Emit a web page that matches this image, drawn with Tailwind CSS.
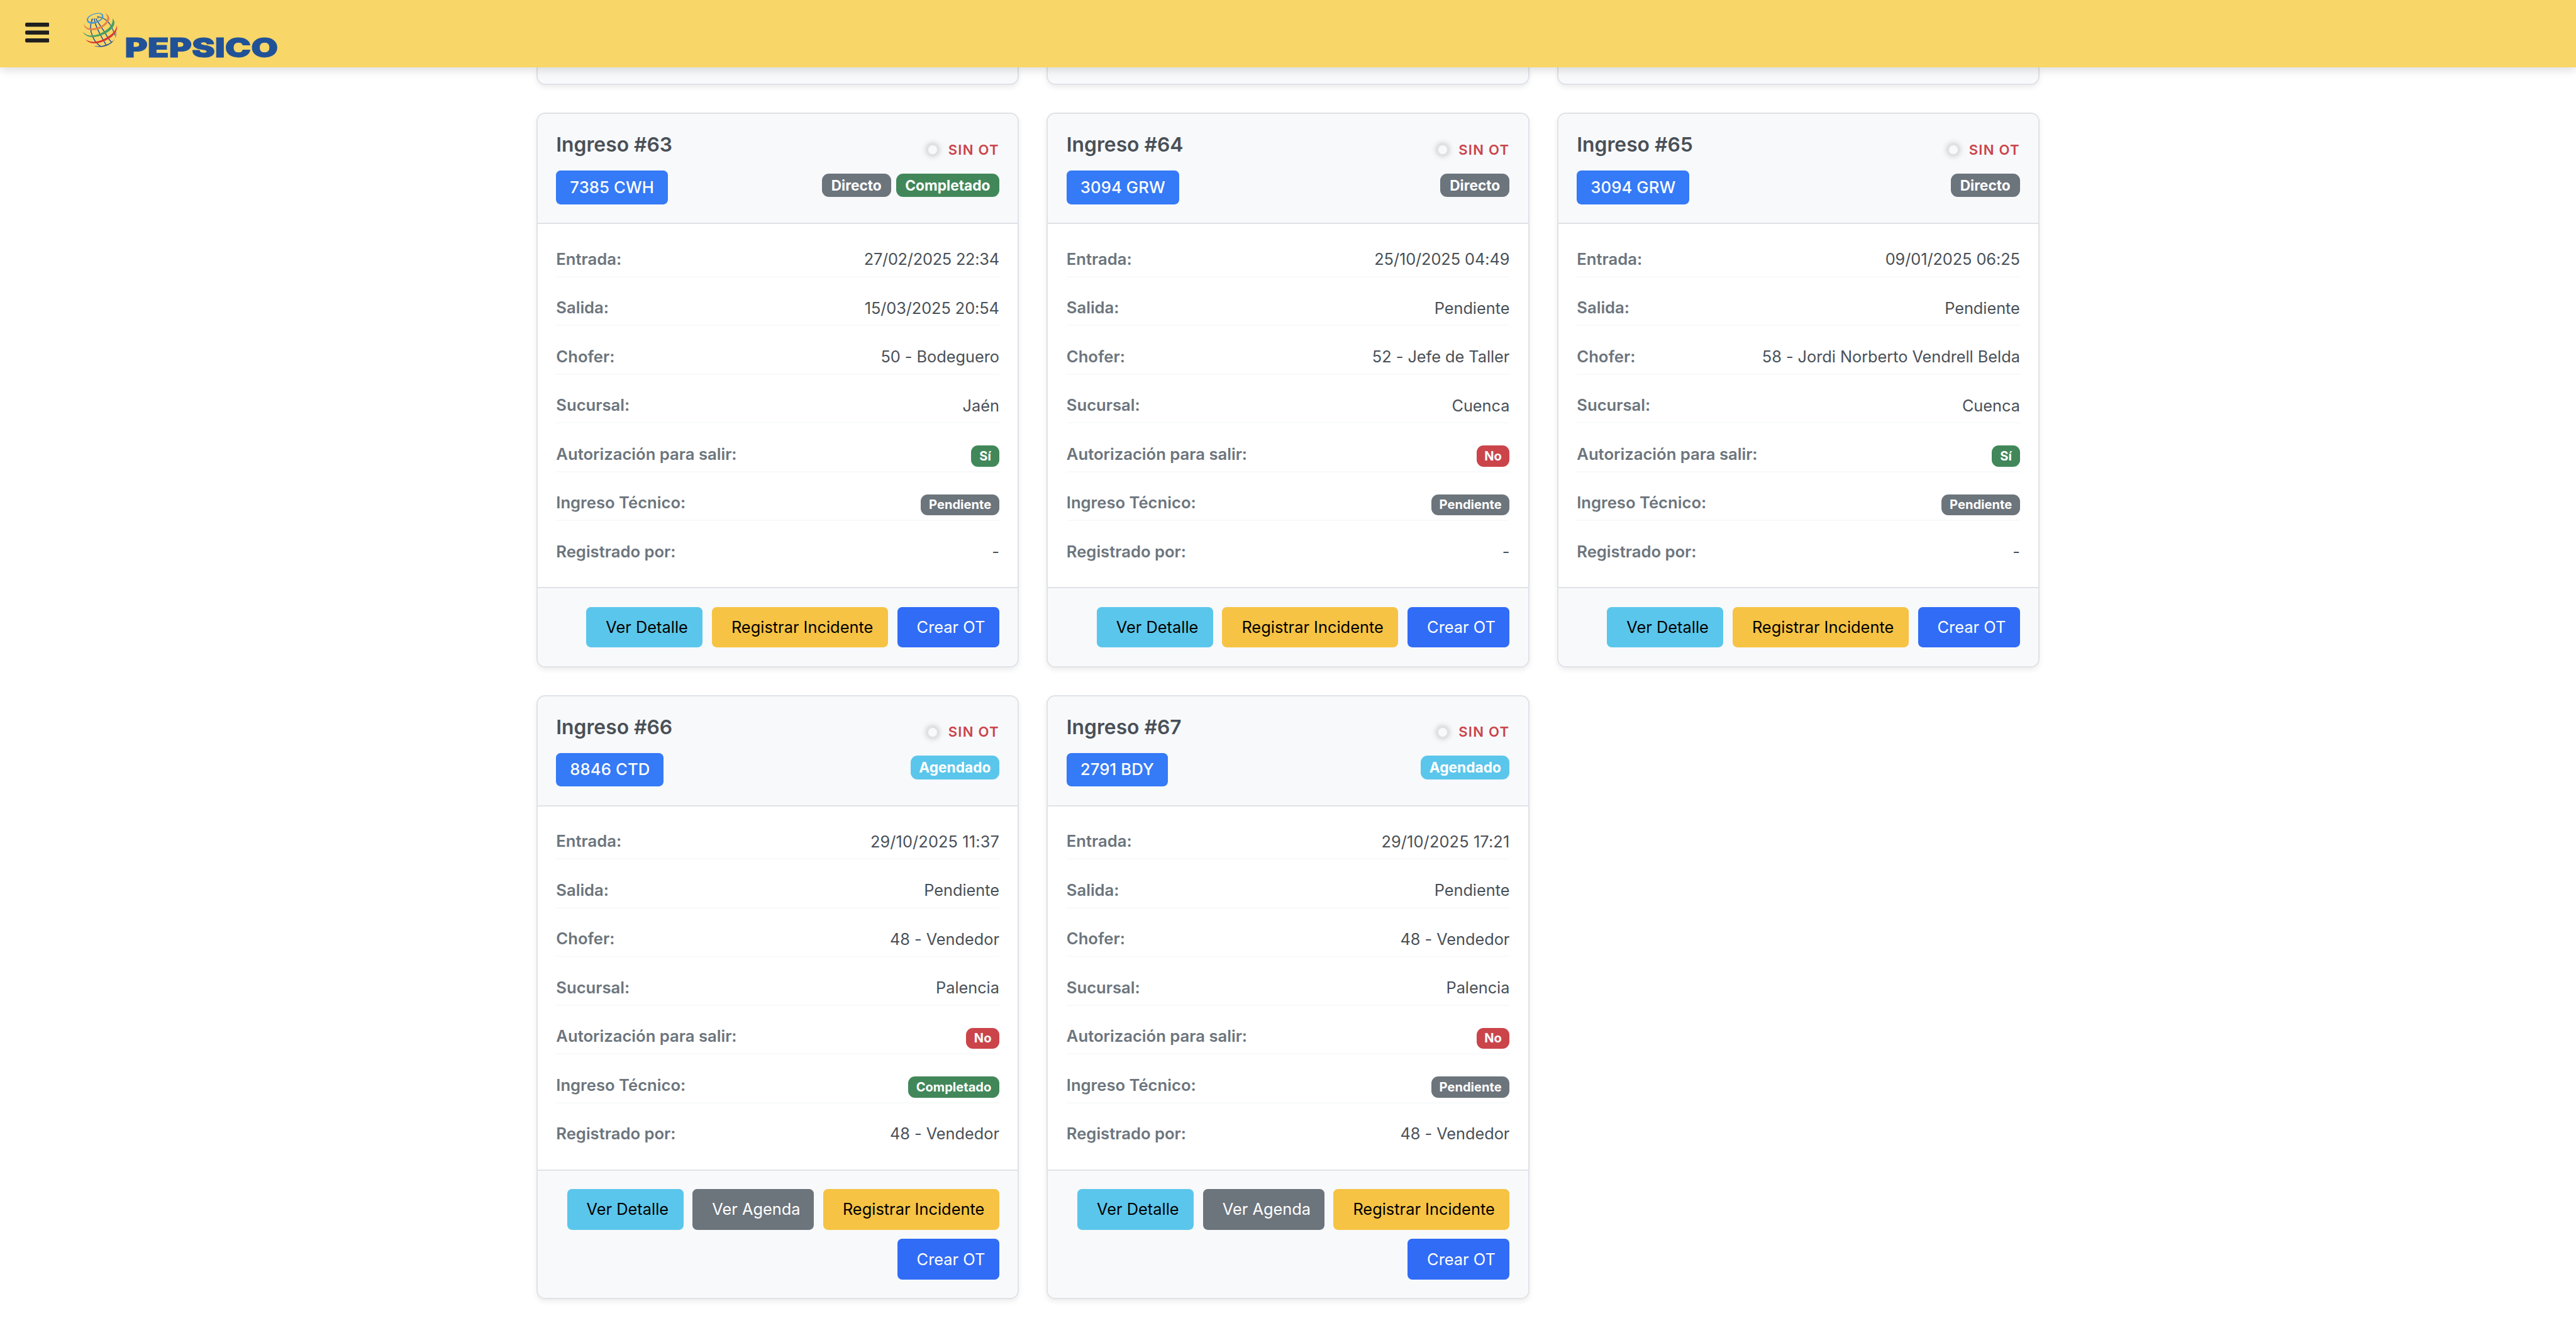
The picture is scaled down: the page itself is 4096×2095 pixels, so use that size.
<!DOCTYPE html>
<html lang="es">
<head>
<meta charset="utf-8">
<title>Ingresos</title>
<script src="https://cdn.jsdelivr.net/npm/@tailwindcss/browser@4"></script>
</head>
<body class="bg-white font-['Inter',sans-serif] text-[#495057] h-[2095px] overflow-hidden">
<header class="relative z-10 h-[107px] flex bg-[#f8d668] shadow-[0_4px_14px_rgba(0,0,0,0.14)]">
  <svg class="ml-[39.7px] mt-[36px] w-[38.8px] h-[31.6px] shrink-0" viewBox="0 0 42 34.3" fill="#1f1f1f">
    <rect x="0" y="0" width="42" height="7" rx="2.4"/><rect x="0" y="13.5" width="42" height="7.2" rx="2.4"/><rect x="0" y="27.2" width="42" height="7" rx="2.4"/>
  </svg>
  <svg class="ml-[50.6px] mt-[18.4px] w-[61.5px] h-[58.4px] shrink-0" viewBox="420 60 200 190" fill="none">
    <g stroke="#215298" stroke-width="4.8">
      <path d="M479 98C464 128 466 160 480 192C490 215 504 231 524 243"/>
      <path d="M488 97C490 125 503 150 516 174C530 204 543 220 551 238"/>
      <path d="M496 98C510 120 528 148 543 170C557 194 566 208 577 220"/>
      <path d="M503 87C535 90 560 110 574 134C586 156 592 176 595 184" stroke-width="4"/>
      <path d="M600 166C600 178 599 188 597 194" stroke-width="2.6"/>
      <path d="M502 96L514 92" stroke-width="2.4"/><path d="M474 108L477 98" stroke-width="2.4"/>
    </g>
    <path fill="#215298" d="M486 239C518 250 568 246 594 203C574 228 530 246 486 239Z"/>
    <path fill="#4497d8" fill-rule="evenodd" d="M450 108C445 88 478 70 508 68C528 68 537 76 535 88C531 106 507 121 482 124C463 125 452 119 450 108ZM456 103C457 113 468 117 485 115C508 112 527 100 528 86C529 76 519 71 505 72C482 74 455 88 456 103Z"/>
    <path fill="#e5834a" d="M436 120C429 148 458 162 495 156C538 148 570 116 565 91C562 80 555 74 545 71C554 79 558 90 555 100C547 124 520 142 493 146C462 152 435 145 436 120Z"/>
    <path fill="#459f61" d="M428 163C440 196 482 198 517 187C567 171 599 138 591 110L583 96C588 126 564 156 515 177C480 189 446 190 428 163Z"/>
    <path fill="#d9362f" d="M442 205C460 228 492 229 522 220C572 205 612 170 605 132C602 160 573 189 525 209C490 222 465 220 442 205Z"/>
  </svg>
  <svg class="ml-[1px] mt-[46px] w-[262px] h-[60px] shrink-0" viewBox="-6 -8 262 60">
    <text x="0.5" y="37" font-family="Inter" font-weight="900" font-size="42" textLength="243.5" lengthAdjust="spacingAndGlyphs" fill="#215298" stroke="#215298" stroke-width="0.9">PEPSICO</text>
  </svg>
</header>

<main id="grid" class="mx-auto w-[2390px] grid grid-cols-[repeat(3,767.2px)] gap-x-[44.3px] gap-y-[44px] items-start">
  <div class="h-[28px] rounded-b-[14px] border-2 border-t-0 border-[#dfe2e7] bg-[#f8f9fb] shadow-[0_4px_8px_rgba(0,0,0,0.075)]"></div>
  <div class="h-[28px] rounded-b-[14px] border-2 border-t-0 border-[#dfe2e7] bg-[#f8f9fb] shadow-[0_4px_8px_rgba(0,0,0,0.075)]"></div>
  <div class="h-[28px] rounded-b-[14px] border-2 border-t-0 border-[#dfe2e7] bg-[#f8f9fb] shadow-[0_4px_8px_rgba(0,0,0,0.075)]"></div>
</main>

<script>
const COLORS = { gray: "bg-[#6c747c]", green: "bg-[#41875a]", red: "bg-[#cb444a]", cyan: "bg-[#5bc6eb]" };
const BUTTONS = {
  detalle: ["Ver Detalle", "w-[185px] bg-[#5bc6eb] text-black"],
  agenda: ["Ver Agenda", "w-[193px] bg-[#6c747c] text-white"],
  incidente: ["Registrar Incidente", "w-[280px] bg-[#f6c344] text-black"],
  ot: ["Crear OT", "w-[162.3px] bg-[#316cf6] text-white"]
};
const BASIC = ["detalle", "incidente", "ot"];
const WITH_AGENDA = ["detalle", "agenda", "incidente", "ot"];
// Badge: text, colour, width
const P = ["Pendiente", "gray", "w-[124.5px]"], SI = ["Sí", "green", "w-[44.5px]"], NO = ["No", "red", "w-[52.5px]"];
const CS = ["Completado", "green", "w-[144.8px]"], C = ["Completado", "green", "w-[164px]"];
const D = ["Directo", "gray", "w-[110.3px]"], A = ["Agendado", "cyan", "w-[141px]"];
const ingresos = [
  { id: 63, plate: "7385 CWH", tags: [D, C], v: ["27/02/2025 22:34", "15/03/2025 20:54", "50 - Bodeguero", "Jaén", SI, P, "-"], b: BASIC },
  { id: 64, plate: "3094 GRW", tags: [D], v: ["25/10/2025 04:49", "Pendiente", "52 - Jefe de Taller", "Cuenca", NO, P, "-"], b: BASIC },
  { id: 65, plate: "3094 GRW", tags: [D], v: ["09/01/2025 06:25", "Pendiente", "58 - Jordi Norberto Vendrell Belda", "Cuenca", SI, P, "-"], b: BASIC },
  { id: 66, plate: "8846 CTD", tags: [A], v: ["29/10/2025 11:37", "Pendiente", "48 - Vendedor", "Palencia", NO, CS, "48 - Vendedor"], b: WITH_AGENDA },
  { id: 67, plate: "2791 BDY", tags: [A], v: ["29/10/2025 17:21", "Pendiente", "48 - Vendedor", "Palencia", NO, P, "48 - Vendedor"], b: WITH_AGENDA }
];
const LABELS = ["Entrada:", "Salida:", "Chofer:", "Sucursal:", "Autorización para salir:", "Ingreso Técnico:", "Registrado por:"];
// The digit 1 is narrow, so dates that hold more of them get wider tracking
const DATE_TRACKING = ["tracking-[-0.25px]", "tracking-[-0.09px]", "tracking-[0.02px]", "tracking-[0.12px]"];

const value = v => Array.isArray(v)
  ? `<span class="mt-[6px] h-[33.2px] flex items-center justify-center rounded-[11px] text-[20.1px] font-bold text-white ${v[2]} ${COLORS[v[1]]}">${v[0]}</span>`
  : `<span class="text-[25.35px] ${v.includes("/") ? DATE_TRACKING[v.split("1").length - 1] : "tracking-[-0.04px]"}">${v}</span>`;

const card = c => `
<article class="rounded-[14px] border-2 border-[#dfe2e7] bg-white overflow-hidden shadow-[0_4px_8px_rgba(0,0,0,0.075)]">
  <div class="h-[175px] px-[29.3px] pt-[30px] flex justify-between items-start bg-[#f8f9fb] border-b-2 border-[#dfe2e7]">
    <div>
      <h5 class="h-[38px] flex items-center text-[31.8px] font-semibold">Ingreso #${c.id}</h5>
      <span class="mt-[22.2px] h-[53.5px] px-[22px] inline-flex items-center rounded-[7.4px] bg-[#357af6] text-white text-[25.7px] font-medium tracking-[0.1px]">${c.plate}</span>
    </div>
    <div class="pt-[12.3px] flex flex-col items-end">
      <div class="h-[30px] flex items-center gap-[14px]">
        <span class="size-[22px] rounded-full border-4 border-[#dfe1e5] shadow-[0_0_9px_rgba(0,0,0,0.17)]"></span>
        <span class="text-[22.1px] font-semibold tracking-[1.25px] text-[#cb444a]">SIN OT</span>
      </div>
      <div class="mt-[22.5px] flex gap-[8px]">
        ${c.tags.map(t => `<span class="h-[37.6px] flex items-center justify-center rounded-[11px] text-[22.7px] font-bold text-white ${t[2]} ${COLORS[t[1]]}">${t[0]}</span>`).join("")}
      </div>
    </div>
  </div>
  <div class="h-[577.3px] px-[29.3px] pt-[29.5px] flex flex-col gap-[22.16px]">
    ${LABELS.map((l, i) => `<div class="h-[55.3px] flex justify-between items-center border-b-2 ${i < 6 ? "border-[#f8f9fa]" : "border-transparent"}">
      <span class="text-[25.65px] font-semibold text-[#6c757d]">${l}</span>${value(c.v[i])}
    </div>`).join("")}
  </div>
  <div class="border-t-2 border-[#dfe2e7] bg-[#f8f9fb] px-[29.3px] py-[29.4px] flex flex-wrap justify-end gap-[14.7px]">
    ${c.b.map(k => `<button class="h-[64.5px] pl-[31px] flex items-center whitespace-nowrap rounded-[7.4px] text-[25.4px] ${BUTTONS[k][1]}">${BUTTONS[k][0]}</button>`).join("")}
  </div>
</article>`;
document.getElementById("grid").insertAdjacentHTML("beforeend", ingresos.map(card).join(""));
</script>
</body>
</html>
